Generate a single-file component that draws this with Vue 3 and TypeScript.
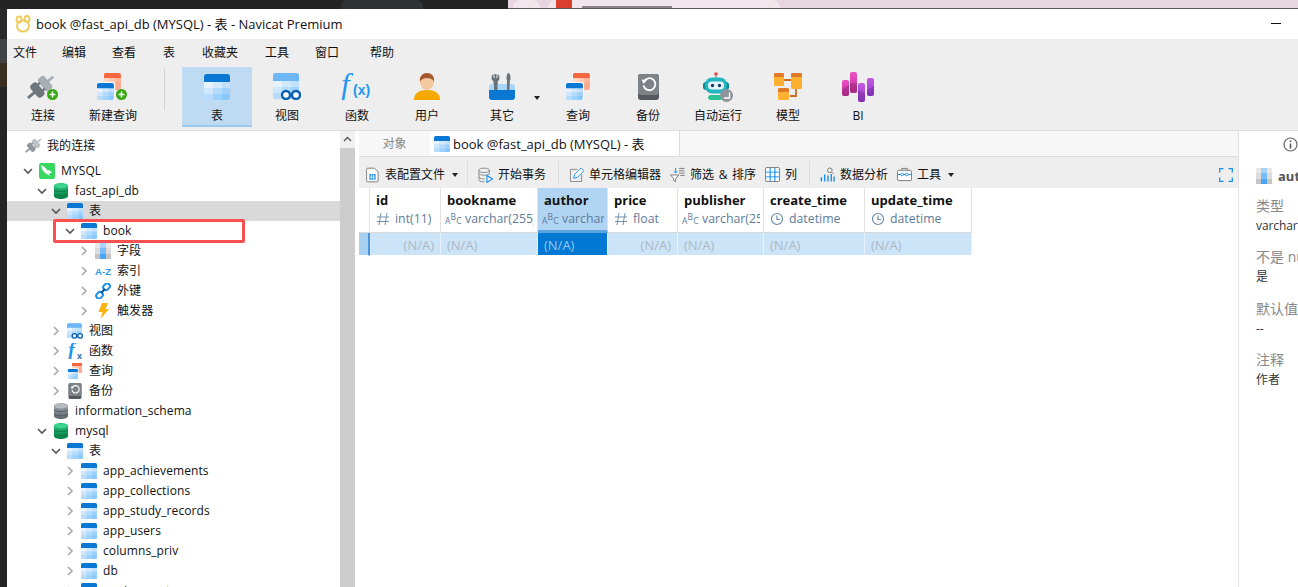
<script setup lang="ts">
interface ToolItem { label: string; icon: string; w: number; h: number; active?: boolean; cls?: string }
interface TreeRow { d: number; label: string; icon: string; open?: boolean; leaf?: boolean; sel?: boolean; mark?: boolean }
interface Col { name: string; type: string; kind: string; w: number; on?: boolean; right?: boolean }

const menus = ['文件', '编辑', '查看', '表', '收藏夹', '工具', '窗口', '帮助']

const toolsA: ToolItem[] = [
  { label: '连接', icon: 'plug', w: 32, h: 28 },
  { label: '新建查询', icon: 'newquery', w: 32, h: 28 },
]
const toolsB: ToolItem[] = [
  { label: '表', icon: 'table', w: 26, h: 26, active: true },
  { label: '视图', icon: 'view', w: 28, h: 27 },
  { label: '函数', icon: 'fx', w: 32, h: 27 },
  { label: '用户', icon: 'user', w: 26, h: 27 },
  { label: '其它', icon: 'tools', w: 26, h: 27, cls: 'other' },
]
const toolsC: ToolItem[] = [
  { label: '查询', icon: 'query', w: 24, h: 27 },
  { label: '备份', icon: 'backup', w: 21, h: 26 },
  { label: '自动运行', icon: 'robot', w: 30, h: 30 },
  { label: '模型', icon: 'model', w: 28, h: 27 },
  { label: 'BI', icon: 'bi', w: 32, h: 30 },
]

const tables = ['app_achievements', 'app_collections', 'app_study_records', 'app_users', 'columns_priv', 'db', 'engine_cost']
const tree: TreeRow[] = [
  { d: 0, label: 'MYSQL', icon: 'mysql', open: true },
  { d: 1, label: 'fast_api_db', icon: 'dbgreen', open: true },
  { d: 2, label: '表', icon: 'table', open: true, sel: true },
  { d: 3, label: 'book', icon: 'table', open: true, mark: true },
  { d: 4, label: '字段', icon: 'field' },
  { d: 4, label: '索引', icon: 'az' },
  { d: 4, label: '外键', icon: 'link' },
  { d: 4, label: '触发器', icon: 'bolt' },
  { d: 2, label: '视图', icon: 'view' },
  { d: 2, label: '函数', icon: 'fxs' },
  { d: 2, label: '查询', icon: 'query' },
  { d: 2, label: '备份', icon: 'backup' },
  { d: 1, label: 'information_schema', icon: 'dbgray', leaf: true },
  { d: 1, label: 'mysql', icon: 'dbgreen', open: true },
  { d: 2, label: '表', icon: 'table', open: true },
  ...tables.map((t) => ({ d: 3, label: t, icon: 'table' })),
]

const cols: Col[] = [
  { name: 'id', type: 'int(11)', kind: 'num', w: 71, right: true },
  { name: 'bookname', type: 'varchar(255)', kind: 'str', w: 97 },
  { name: 'author', type: 'varchar(255)', kind: 'str', w: 70, on: true },
  { name: 'price', type: 'float', kind: 'num', w: 70, right: true },
  { name: 'publisher', type: 'varchar(255)', kind: 'str', w: 86 },
  { name: 'create_time', type: 'datetime', kind: 'time', w: 101 },
  { name: 'update_time', type: 'datetime', kind: 'time', w: 107 },
]
const gridCols = `11px ${cols.map((c) => c.w + 'px').join(' ')}`

const details = [
  { k: '类型', v: 'varchar' },
  { k: '不是 null', v: '是' },
  { k: '默认值', v: '--' },
  { k: '注释', v: '作者' },
]
</script>

<template>
  <svg class="sprite" width="0" height="0" aria-hidden="true">
    <defs>
      <clipPath id="round"><rect width="26" height="26" rx="3" /></clipPath>
      <linearGradient id="greenDb" x1="0" x2="0" y1="0" y2="1"><stop offset="0" stop-color="#27c47a" /><stop offset="1" stop-color="#0a7d45" /></linearGradient>
      <linearGradient id="grayDb" x1="0" x2="0" y1="0" y2="1"><stop offset="0" stop-color="#a5abb1" /><stop offset="1" stop-color="#5d646b" /></linearGradient>
      <linearGradient id="pink" x1="0" x2="0" y1="0" y2="1"><stop offset="0" stop-color="#ea4fc4" /><stop offset="1" stop-color="#c92f9a" /></linearGradient>
      <linearGradient id="purple" x1="0" x2="0" y1="0" y2="1"><stop offset="0" stop-color="#c65be0" /><stop offset="1" stop-color="#9a38d8" /></linearGradient>
      <g id="cells" clip-path="url(#round)">
        <rect width="26" height="26" fill="#b3dbfc" />
        <rect y="8" width="9" height="6" fill="#e6f2fe" /><rect x="9" y="8" width="9" height="6" fill="#d3e9fd" /><rect x="18" y="8" width="8" height="6" fill="#c0e0fc" />
        <rect y="14" width="9" height="6" fill="#cfe7fd" /><rect x="9" y="14" width="9" height="6" fill="#b3dbfc" /><rect x="18" y="14" width="8" height="6" fill="#9ed1fb" />
        <rect y="20" width="9" height="6" fill="#b8dcfc" /><rect x="9" y="20" width="9" height="6" fill="#9ed1fb" /><rect x="18" y="20" width="8" height="6" fill="#8ac8fa" />
      </g>
      <g id="orangeCells" clip-path="url(#round)">
        <rect width="26" height="26" fill="#ffb9a0" />
        <rect width="26" height="8" fill="#f2673f" />
        <rect y="8" width="9" height="6" fill="#ffd9ca" /><rect x="9" y="8" width="9" height="6" fill="#ffc8b3" /><rect x="18" y="8" width="8" height="6" fill="#ffb59b" />
        <rect x="18" y="14" width="8" height="12" fill="#ffa98c" />
      </g>
      <g id="plugBody" transform="rotate(-40 14 14)">
        <rect x="-3" y="12.600" width="9" height="2.800" fill="#6d757d" />
        <rect x="5" y="6" width="8.500" height="16" rx="3" fill="#6d757d" />
        <rect x="15" y="6" width="8.500" height="16" rx="3" fill="#a9aeb4" />
        <rect x="12" y="9" width="4" height="2.400" fill="#6d757d" /><rect x="12" y="16.600" width="4" height="2.400" fill="#6d757d" />
        <rect x="22" y="12.600" width="8" height="2.800" fill="#a9aeb4" />
      </g>
    </defs>

    <symbol id="table" viewBox="0 0 26 26">
      <use href="#cells" />
      <path d="M3 0h20a3 3 0 0 1 3 3v5H0V3a3 3 0 0 1 3-3z" fill="#0a78d2" />
    </symbol>
    <symbol id="view" viewBox="0 0 28 27">
      <use href="#cells" />
      <path d="M3 0h20a3 3 0 0 1 3 3v5H0V3a3 3 0 0 1 3-3z" fill="#6cb6f5" />
      <circle cx="13" cy="22" r="4" fill="#fff" stroke="#0a5fb0" stroke-width="2.400" />
      <circle cx="23" cy="22" r="4" fill="#fff" stroke="#0a5fb0" stroke-width="2.400" />
    </symbol>
    <symbol id="query" viewBox="0 0 24 27">
      <g transform="translate(7 0) scale(.65)"><use href="#orangeCells" /></g>
      <rect x="0" y="9" width="18" height="18" rx="2" fill="#fff" />
      <g transform="translate(0 10) scale(.65)"><use href="#cells" /><path d="M3 0h20a3 3 0 0 1 3 3v5H0V3a3 3 0 0 1 3-3z" fill="#0a78d2" /></g>
    </symbol>
    <symbol id="newquery" viewBox="0 0 32 28">
      <g transform="translate(7 0) scale(.65)"><use href="#orangeCells" /></g>
      <rect x="0" y="9" width="18" height="18" rx="2" fill="#fff" />
      <g transform="translate(0 10) scale(.65)"><use href="#cells" /><path d="M3 0h20a3 3 0 0 1 3 3v5H0V3a3 3 0 0 1 3-3z" fill="#0a78d2" /></g>
      <circle cx="24.500" cy="21.500" r="5.500" fill="#35a813" />
      <path d="M24.500 18.500v6M21.500 21.500h6" stroke="#fff" stroke-width="1.500" />
    </symbol>
    <symbol id="plug" viewBox="0 0 32 28">
      <use href="#plugBody" />
      <circle cx="25.500" cy="21.500" r="5.500" fill="#35a813" />
      <path d="M25.500 18.500v6M22.500 21.500h6" stroke="#fff" stroke-width="1.500" />
    </symbol>
    <symbol id="plugPlain" viewBox="0 0 28 28">
      <use href="#plugBody" />
    </symbol>
    <symbol id="user" viewBox="0 0 26 27">
      <path d="M0 27c0-7 5-10 13-10s13 3 13 10z" fill="#f5a800" />
      <ellipse cx="13" cy="9" rx="7" ry="8" fill="#f5c9a0" />
      <path d="M6 9C5 3 9 0 13 0s8 3 7 9c-1-3-4-4-7-4s-6 1-7 4z" fill="#a5562a" />
    </symbol>
    <symbol id="tools" viewBox="0 0 26 27">
      <path d="M6 1v4h-1V1a4 4 0 0 0-2 4c0 2 1 3 2 3v9h4V8c1 0 2-1 2-3a4 4 0 0 0-2-4v4H8V1z" fill="#6b7178" transform="translate(-.5 0)" />
      <path d="M19 0c-1 1-1.500 3-1.500 5s.5 3 1 3v9h2V8c.5 0 1-1 1-3s-.5-4-1.500-5z" fill="#6b7178" />
      <path d="M0 14a3 3 0 0 1 3-3h20a3 3 0 0 1 3 3v3H0z" fill="#a8d5fb" />
      <path d="M0 17h26v7a3 3 0 0 1-3 3H3a3 3 0 0 1-3-3z" fill="#0a78d2" />
      <rect x="5" y="8" width="3.500" height="9" fill="#6b7178" /><rect x="18" y="8" width="2.500" height="9" fill="#6b7178" />
    </symbol>
    <symbol id="backup" viewBox="0 0 21 26">
      <rect width="21" height="26" rx="3" fill="#55595e" />
      <rect width="21" height="21" rx="3" fill="#7d8287" />
      <path d="M6 7.500a6 6 0 1 1-.5 4" fill="none" stroke="#fff" stroke-width="1.800" />
      <path d="M3.500 5.500l5.500.5-3.500 4z" fill="#fff" />
    </symbol>
    <symbol id="robot" viewBox="0 0 30 30">
      <circle cx="13" cy="2" r="1.800" fill="#e64545" /><rect x="12.400" y="3" width="1.200" height="3" fill="#8a9096" />
      <rect x="0" y="10" width="26" height="8" rx="3" fill="#0f8a8f" />
      <rect x="2" y="5.500" width="22" height="16" rx="7" fill="#23b5c0" />
      <rect x="5" y="9.500" width="16" height="8" rx="4" fill="#e8f6fb" />
      <circle cx="9.500" cy="13.500" r="1.700" fill="#1f3d6b" /><circle cx="16.500" cy="13.500" r="1.700" fill="#1f3d6b" />
      <path d="M5 26a3 3 0 0 1 3-3h10v5H8a3 3 0 0 1-3-2z" fill="#27c295" />
      <circle cx="23.500" cy="23.500" r="6.500" fill="#8d949b" />
      <path d="M26.500 20.500v5.500H21" fill="none" stroke="#fff" stroke-width="1.400" />
    </symbol>
    <symbol id="model" viewBox="0 0 28 27">
      <path d="M10 7h10M22 16v7H16" fill="none" stroke="#c96f22" stroke-width="1.800" />
      <rect x="0" y="0" width="10" height="13" rx="1.500" fill="#ffb030" /><path d="M1.500 0h7A1.500 1.500 0 0 1 10 1.500V4H0V1.500A1.500 1.500 0 0 1 1.500 0z" fill="#e07a28" />
      <rect x="17" y="0" width="11" height="16" rx="1.500" fill="#ffb030" /><path d="M18.500 0h8A1.500 1.500 0 0 1 28 1.500V4H17V1.500A1.500 1.500 0 0 1 18.500 0z" fill="#e07a28" />
      <rect x="4" y="15" width="11" height="12" rx="1.500" fill="#ffb030" /><path d="M5.500 15h8a1.500 1.500 0 0 1 1.500 1.500V19H4v-2.500A1.500 1.500 0 0 1 5.500 15z" fill="#e07a28" />
    </symbol>
    <symbol id="bi" viewBox="0 0 32 30">
      <rect x="0" y="8" width="7" height="16" rx="2" fill="url(#pink)" />
      <rect x="8" y="0" width="7" height="21" rx="2" fill="url(#pink)" />
      <rect x="16" y="11" width="7" height="19" rx="2" fill="url(#purple)" />
      <rect x="25" y="6" width="7" height="18" rx="2" fill="url(#purple)" />
      <path d="M0 17l7-4v11H2a2 2 0 0 1-2-2zM8 21V11h7v10zM16 18l7 3v7a2 2 0 0 1-2 2h-3a2 2 0 0 1-2-2zM25 18l7-4v8a2 2 0 0 1-2 2h-3a2 2 0 0 1-2-2z" fill="#000" opacity=".16" />
    </symbol>
    <symbol id="mysql" viewBox="0 0 16 16">
      <rect width="16" height="16" rx="2" fill="#36d860" />
      <path d="M2 2c3 1 5 3 6 5 2 0 4 1 5 3-1 0-2 0-3 .5l1 3c-1-1-2-2-3-2.500-1 0-2-1-3-2L3 6z" fill="#fff" />
    </symbol>
    <symbol id="dbgreen" viewBox="0 0 14 16">
      <path d="M0 3c0-4 14-4 14 0v10c0 4-14 4-14 0z" fill="url(#greenDb)" />
      <ellipse cx="7" cy="3" rx="6.500" ry="2.500" fill="#3bd68c" />
      <path d="M0 7c2 2 12 2 14 0M0 11c2 2 12 2 14 0" fill="none" stroke="#0a6e3c" stroke-width=".7" />
    </symbol>
    <symbol id="dbgray" viewBox="0 0 14 16">
      <path d="M0 3c0-4 14-4 14 0v10c0 4-14 4-14 0z" fill="url(#grayDb)" />
      <ellipse cx="7" cy="3" rx="6.500" ry="2.500" fill="#b5babf" />
      <path d="M0 7c2 2 12 2 14 0M0 11c2 2 12 2 14 0" fill="none" stroke="#4e555b" stroke-width=".7" />
    </symbol>
    <symbol id="field" viewBox="0 0 16 16">
      <rect width="5" height="5" fill="#e8e8e8" /><rect x="5" width="6" height="5" fill="#a8d4fb" /><rect x="11" width="5" height="5" fill="#e8e8e8" />
      <rect y="5" width="5" height="6" fill="#dcdcdc" /><rect x="5" y="5" width="6" height="6" fill="#78bdf7" /><rect x="11" y="5" width="5" height="6" fill="#dcdcdc" />
      <rect y="11" width="5" height="5" fill="#c4c4c4" /><rect x="5" y="11" width="6" height="5" fill="#4aa5f2" /><rect x="11" y="11" width="5" height="5" fill="#c4c4c4" />
    </symbol>
    <symbol id="link" viewBox="0 0 16 16">
      <g fill="none" stroke="#1b8fe8" stroke-width="2">
        <rect x="8" y="1" width="7" height="5.500" rx="2.700" transform="rotate(-45 11.500 3.700)" />
        <rect x="1" y="9.500" width="7" height="5.500" rx="2.700" transform="rotate(-45 4.500 12.200)" />
        <path d="M6 10l4-4" stroke="#0a4f8f" />
      </g>
    </symbol>
    <symbol id="bolt" viewBox="0 0 16 16">
      <path d="M7 0h6l-2.500 6H14L5.500 16 7.500 9H3.500z" fill="#fbb20c" />
    </symbol>

    <symbol id="sProfile" viewBox="0 0 16 16">
      <path d="M3 .7h7l4 4V14a1.300 1.300 0 0 1-1.300 1.300H3A1.300 1.300 0 0 1 1.700 14V2A1.300 1.300 0 0 1 3 .7z" fill="#fff" stroke="#777" />
      <rect x="4.500" y="7" width="7" height="6" rx="1" fill="#1b8fe8" />
      <path d="M4.500 9.200h7M4.500 11h7M6.800 7v6M9.200 7v6" stroke="#fff" stroke-width=".6" />
    </symbol>
    <symbol id="sDb" viewBox="0 0 16 16">
      <g fill="none" stroke="#888">
        <ellipse cx="6.500" cy="3" rx="5.500" ry="2.300" />
        <path d="M1 3v10c0 2 4 2.500 6 2.300M12 3v4M1 6.500c1 2 8 2.500 11 .5M1 10c1 2 4 2.300 6 2.200" />
      </g>
      <path d="M9.500 8.500l6 3.700-6 3.700z" fill="none" stroke="#1b8fe8" stroke-width="1.200" />
    </symbol>
    <symbol id="sEdit" viewBox="0 0 16 16">
      <path d="M9 2.500H1.500v13h12V8" fill="none" stroke="#888" />
      <path d="M5 12l1-4 7-7 3 3-7 7z" fill="#fff" stroke="#1b8fe8" />
    </symbol>
    <symbol id="sFilter" viewBox="0 0 16 16">
      <path d="M.5 8.500h9L6 12.500v3l-2-1v-2z" fill="#fff" stroke="#777" />
      <path d="M6 1v5M4.500 4.500L6 6.500l1.500-2" fill="none" stroke="#1b8fe8" />
      <path d="M9.500 1.500h6M9.500 4h6M9.500 6.500h6M11 9h4.500" stroke="#777" />
    </symbol>
    <symbol id="sCols" viewBox="0 0 16 16">
      <rect x=".5" y=".5" width="15" height="15" rx="1.500" fill="#fff" stroke="#777" />
      <path d="M5.500 1v14M10.500 1v14" stroke="#1b8fe8" stroke-width="1.200" /><path d="M1 5.500h14M1 10.500h14" stroke="#1b8fe8" />
    </symbol>
    <symbol id="sChart" viewBox="0 0 16 16">
      <path d="M1.500 11v4.500M5 8v7.500M8.500 9v6.500M12 7.500v8M15 10v5.500" stroke="#1b8fe8" stroke-width="1.500" fill="none" />
      <circle cx="10.500" cy="3.500" r="2.500" fill="none" stroke="#777" /><path d="M12.500 5.500l2 2" stroke="#777" />
    </symbol>
    <symbol id="sTool" viewBox="0 0 16 16">
      <path d="M5 3.500V1.500h6v2" fill="none" stroke="#777" />
      <rect x=".5" y="3.500" width="15" height="11" rx="1.500" fill="#fff" stroke="#777" />
      <path d="M1 8h3M7 8h2M12 8h3" stroke="#1b8fe8" /><rect x="4" y="6.800" width="3" height="2.400" rx="1" fill="none" stroke="#1b8fe8" /><rect x="9" y="6.800" width="3" height="2.400" rx="1" fill="none" stroke="#1b8fe8" />
    </symbol>
    <symbol id="sFull" viewBox="0 0 14 14">
      <path d="M.7 4.500V.7h3.800M9.500.7h3.800v3.800M13.300 9.500v3.800H9.500M4.500 13.300H.7V9.500" fill="none" stroke="#1b8fe8" stroke-width="1.300" />
    </symbol>
    <symbol id="sLogo" viewBox="0 0 16 18">
      <g fill="none" stroke="#f0cb5e" stroke-width="2">
        <ellipse cx="8" cy="11" rx="6" ry="5.500" /><ellipse cx="4" cy="4.500" rx="2.500" ry="3" /><ellipse cx="12" cy="4" rx="2.500" ry="3" />
      </g>
    </symbol>
    <symbol id="sHash" viewBox="0 0 14 14">
      <path d="M5 1L3 13M11 1L9 13M1 5h12M1 9.500h12" stroke="#7490ad" fill="none" />
    </symbol>
    <symbol id="sClock" viewBox="0 0 14 14">
      <circle cx="7" cy="7" r="5.500" fill="none" stroke="#6a8aac" stroke-width="1.200" />
      <path d="M7 3.500V7.500h3" fill="none" stroke="#6a8aac" stroke-width="1.200" />
    </symbol>
  </svg>

  <div class="screen">
    <div class="desk-top">
      <div class="desk-dark"><span class="dark-tab"></span></div>
      <div class="desk-pink">
        <span class="pill"></span><span class="pill wide"><i class="red"></i><i class="ghost"></i></span>
      </div>
    </div>
    <div class="desk-row">
      <div class="desk-left">
        <span class="l-a"></span><span class="l-b"></span><span class="l-c"></span>
      </div>
      <div class="win">
        <header class="title">
          <svg class="logo" width="16" height="18"><use href="#sLogo" /></svg>
          <span>book @fast_api_db (MYSQL) - 表 - Navicat Premium</span>
          <i class="min"></i>
        </header>

        <nav class="menu">
          <span v-for="m in menus" :key="m">{{ m }}</span>
        </nav>

        <div class="toolbar">
          <div v-for="t in toolsA" :key="t.label" class="tool">
            <span class="tool-ico"><svg :width="t.w" :height="t.h"><use :href="'#' + t.icon" /></svg></span>
            <span>{{ t.label }}</span>
          </div>
          <i class="tool-sep"></i>
          <div v-for="t in toolsB" :key="t.label" class="tool" :class="[t.cls, { active: t.active }]">
            <span class="tool-ico">
              <svg :width="t.w" :height="t.h">
                <template v-if="t.icon === 'fx'">
                  <text x="0" y="22" class="fx-f" font-size="31">f</text>
                  <text x="12" y="22" class="fx-x" font-size="14">(x)</text>
                </template>
                <use v-else :href="'#' + t.icon" />
              </svg>
            </span>
            <span>{{ t.label }}</span>
          </div>
          <i class="caret tool-caret"></i>
          <div v-for="t in toolsC" :key="t.label" class="tool">
            <span class="tool-ico"><svg :width="t.w" :height="t.h"><use :href="'#' + t.icon" /></svg></span>
            <span>{{ t.label }}</span>
          </div>
        </div>

        <div class="body">
          <aside class="side">
            <div class="tree">
              <div class="conn-row">
                <svg width="17" height="17" class="faded"><use href="#plugPlain" /></svg>
                <span>我的连接</span>
              </div>
              <div
                v-for="(r, i) in tree"
                :key="i"
                class="row"
                :class="{ sel: r.sel }"
                :style="{ paddingLeft: 15 + r.d * 14 + 'px' }"
              >
                <svg class="chev" width="12" height="12" viewBox="0 0 12 12">
                  <path v-if="r.open" d="M2 4l4 4 4-4" fill="none" stroke="#555" stroke-width="1.600" />
                  <path v-else-if="!r.leaf" d="M4 2l4 4-4 4" fill="none" stroke="#aaa" stroke-width="1.600" />
                </svg>
                <span class="row-ico">
                  <svg width="16" height="16">
                    <text v-if="r.icon === 'az'" x="0" y="12" class="az" font-size="9.500">A-Z</text>
                    <template v-else-if="r.icon === 'fxs'">
                      <text x="1" y="14" class="fx-f bold" font-size="20">f</text>
                      <text x="10" y="16" class="fx-x dark" font-size="9">x</text>
                    </template>
                    <use v-else :href="'#' + r.icon" />
                  </svg>
                </span>
                <span class="row-text">{{ r.label }}</span>
                <i v-if="r.mark" class="mark"></i>
              </div>
            </div>
            <div class="scroll">
              <svg width="15" height="17" viewBox="0 0 15 17"><path d="M4 10l3.500-3.500L11 10" fill="none" stroke="#555" stroke-width="1.300" /></svg>
            </div>
          </aside>

          <main class="main">
            <div class="tabs">
              <span class="tab">对象</span>
              <span class="tab cur">
                <svg width="16" height="16"><use href="#table" /></svg>
                book @fast_api_db (MYSQL) - 表
              </span>
            </div>
            <div class="subbar">
              <span class="sb"><svg width="15" height="16"><use href="#sProfile" /></svg>表配置文件</span>
              <i class="caret"></i>
              <i class="sb-sep"></i>
              <span class="sb"><svg width="15" height="16"><use href="#sDb" /></svg>开始事务</span>
              <i class="sb-sep"></i>
              <span class="sb"><svg width="15" height="15"><use href="#sEdit" /></svg>单元格编辑器</span>
              <span class="sb"><svg width="15" height="15"><use href="#sFilter" /></svg>筛选 &amp; 排序</span>
              <span class="sb"><svg width="15" height="15"><use href="#sCols" /></svg>列</span>
              <i class="sb-sep"></i>
              <span class="sb"><svg width="15" height="15"><use href="#sChart" /></svg>数据分析</span>
              <span class="sb"><svg width="15" height="15"><use href="#sTool" /></svg>工具</span>
              <i class="caret"></i>
              <svg class="full" width="14" height="14"><use href="#sFull" /></svg>
            </div>
            <div class="grid" :style="{ gridTemplateColumns: gridCols }">
              <div class="h-corner"></div>
              <div v-for="c in cols" :key="c.name" class="h-cell" :class="{ on: c.on }">
                <b>{{ c.name }}</b>
                <span class="type">
                  <svg v-if="c.kind === 'num'" width="14" height="14"><use href="#sHash" /></svg>
                  <svg v-else-if="c.kind === 'time'" width="14" height="14"><use href="#sClock" /></svg>
                  <span v-else class="abc">A<sup>B</sup>C</span>
                  <span class="type-name">{{ c.type }}</span>
                </span>
              </div>
              <div class="r-head"></div>
              <div v-for="c in cols" :key="c.name + '-v'" class="r-cell" :class="{ on: c.on, right: c.right }">(N/A)</div>
            </div>
          </main>

          <aside class="info">
            <svg class="info-i" width="15" height="15" viewBox="0 0 15 15">
              <circle cx="7.500" cy="7.500" r="6.500" fill="none" stroke="#666" stroke-width="1.200" />
              <path d="M7.500 6.500v5M7.500 3.500v1.600" stroke="#555" stroke-width="1.500" />
            </svg>
            <div class="info-head"><svg width="16" height="16"><use href="#field" /></svg><b>author</b></div>
            <div v-for="d in details" :key="d.k" class="kv">
              <span class="k">{{ d.k }}</span>
              <span class="v">{{ d.v }}</span>
            </div>
          </aside>
        </div>
      </div>
    </div>
  </div>
</template>

<style>
html, body { margin: 0; height: 100%; overflow: hidden; background: #fff; }
</style>

<style scoped>
.sprite { position: absolute; }
.screen {
  width: 1298px;
  height: 587px;
  overflow: hidden;
  display: flex;
  flex-direction: column;
  font: 12px/16px "Open Sans", "Noto Sans CJK SC", sans-serif;
  color: #111;
}
.desk-top { height: 9px; display: flex; flex: none; }
.desk-dark { width: 508px; background: #242424; padding-left: 341px; box-sizing: border-box; }
.dark-tab { display: block; width: 82px; height: 9px; background: #2f3336; border-radius: 6px 6px 0 0; }
.desk-pink {
  flex: 1;
  background: #e7d6df;
  border-bottom: 1px solid #5c5a5c;
  display: flex;
  gap: 8px;
  padding-left: 5px;
  box-sizing: border-box;
}
.pill { width: 27px; height: 8px; border-radius: 12px 12px 0 0; background: #f0e6ec; display: flex; align-items: flex-end; }
.pill.wide { width: 232px; padding-left: 8px; gap: 10px; box-sizing: border-box; }
.red { width: 16px; height: 8px; background: #d9412e; }
.ghost { width: 90px; height: 2px; background: #8a8488; }
.desk-row { flex: 1; display: flex; min-height: 0; }
.desk-left { width: 7px; background: #242424; display: flex; flex-direction: column; flex: none; }
.l-a { height: 30px; background: #2a2a2a; }
.l-b { height: 24px; background: #404246; }
.l-c { height: 24px; background: #3a3022; }

.win { flex: 1; min-width: 0; display: flex; flex-direction: column; background: #fff; }
.title { height: 30px; flex: none; display: flex; align-items: center; padding: 0 0 1px 8px; box-sizing: border-box; font-size: 13px; }
.logo { margin-right: 5px; }
.min { width: 10px; height: 1px; background: #111; margin-left: auto; margin-right: 17px; }

.menu {
  height: 27px;
  flex: none;
  background: #eee;
  display: grid;
  grid-template-columns: 49px 50px 51px 39px 63px 50px 55px 24px;
  align-items: center;
  padding-left: 6px;
}

.toolbar { height: 65px; flex: none; background: #eee; border-bottom: 1px solid #ddd; display: flex; box-sizing: border-box; padding-left: 1px; padding-top: 1px; }
.tool { width: 70px; height: 60px; flex: none; display: flex; flex-direction: column; align-items: center; padding-top: 5px; box-sizing: border-box; }
.tool.active { background: #bfdbf3; border-bottom: 2px solid #9cc8ee; }
.tool.other { margin-left: 5px; }
.tool-ico { height: 29px; display: flex; align-items: center; justify-content: center; margin-bottom: 7px; }
.fx-f { font-family: "Liberation Serif", serif; font-style: italic; fill: #2196ee; }
.fx-f.bold { font-weight: 700; }
.fx-x { font-family: "Liberation Sans", sans-serif; font-weight: 700; fill: #2196ee; }
.fx-x.dark { fill: #1569b8; }
.az { font-family: "Liberation Sans", sans-serif; font-weight: 700; fill: #2a96ec; }
.tool-sep { width: 1px; height: 42px; background: #d5d5d5; margin: 1px 17px 0 16px; }
.caret { width: 0; height: 0; border: 3.500px solid transparent; border-top: 4px solid #222; border-bottom: 0; flex: none; }
.tool-caret { margin: 29px 3px 0 -3px; }

.body { flex: 1; min-height: 0; display: flex; }
.side { width: 348px; flex: none; display: flex; background: #fff; }
.tree { width: 333px; flex: none; letter-spacing: .1px; }
.conn-row { height: 30px; display: flex; align-items: center; gap: 5px; padding: 0 0 1px 18px; box-sizing: border-box; }
.faded { opacity: .75; }
.row { height: 20px; display: flex; align-items: center; position: relative; }
.row.sel { background: #d9d9d9; }
.chev { flex: none; margin-right: 5px; }
.row-ico { width: 16px; height: 16px; flex: none; display: flex; margin-right: 6px; }
.row-text { white-space: nowrap; }
.mark {
  position: absolute;
  left: 46px;
  top: -2px;
  width: 192px;
  height: 24px;
  box-sizing: border-box;
  border: 3px solid #fa5050;
  border-radius: 2px;
}
.scroll { width: 15px; background: #cdcdcd; }
.scroll svg { display: block; background: #f0f0f0; }

.main { width: 879px; margin-left: 4px; flex: none; display: flex; flex-direction: column; }
.tabs { height: 26px; flex: none; background: #f7f7f7; border-bottom: 1px solid #ddd; display: flex; box-sizing: border-box; }
.tab { width: 71px; display: flex; align-items: center; justify-content: center; color: #888; gap: 3px; }
.tab.cur { width: 250px; background: #fff; color: #111; justify-content: flex-start; padding-left: 4px; border-right: 1px solid #ddd; box-sizing: border-box; font-size: 13px; }
.subbar { height: 31px; flex: none; background: #eee; display: flex; align-items: center; padding: 4px 0 0 6px; box-sizing: border-box; }
.sb { display: flex; align-items: center; gap: 5px; margin-right: 9px; white-space: nowrap; word-spacing: 1.500px; }
.sb svg { flex: none; }
.subbar > .caret { margin: 0 6px 0 -2px; }
.sb-sep { width: 1px; height: 24px; background: #ddd; margin: -4px 10px 0 3px; }
.full { margin-left: auto; margin-right: 5px; }

.grid { display: grid; width: 613px; grid-template-rows: 45px 23px; }
.h-corner { border-right: 1px solid #e2e2e2; border-bottom: 1px solid #d8d8d8; }
.h-cell {
  padding: 3px 0 0 6px;
  border-right: 1px solid #e2e2e2;
  border-bottom: 1px solid #d8d8d8;
  overflow: hidden;
  white-space: nowrap;
  box-sizing: border-box;
}
.h-cell b { display: block; font-size: 13px; line-height: 19px; color: #111; }
.h-cell.on { background: #b0d4f1; border-bottom: 3px solid #5aa5e0; }
.type { display: flex; align-items: center; gap: 5px; color: #5d7b9a; line-height: 16px; margin-top: 1px; }
.type svg { flex: none; }
.type-name { overflow: hidden; margin-right: 3px; min-width: 0; font-size: 12.300px; }
.abc { font-size: 8.500px; flex: none; width: 15px; color: #5d7b9a; line-height: 12px; margin-left: -2px; padding-top: 4px; letter-spacing: .2px; }
.abc sup { font-size: 8.500px; vertical-align: 4px; line-height: 0; }
.r-head { background: #a8d0f0; border-right: 2px solid #4f94d4; border-bottom: 1px solid #fff; box-sizing: border-box; }
.r-cell {
  background: #cce4f7;
  color: #adb9c6;
  padding: 0 6px;
  font-size: 13px;
  line-height: 24px;
  height: 23px;
  border-right: 1px solid #eaf3fb;
  border-bottom: 1px solid #fff;
  box-sizing: border-box;
  overflow: hidden;
}
.r-cell.right { text-align: right; }
.r-cell.on { background: #0078d4; color: #9cc6ea; }

.info { flex: 1; min-width: 0; border-left: 1px solid #e2e2e2; padding: 6px 0 0 17px; overflow: hidden; display: flex; flex-direction: column; white-space: nowrap; }
.info-i { align-self: flex-start; margin-left: 27px; flex: none; }
.info-head { display: flex; align-items: center; gap: 6px; margin-top: 16px; height: 16px; font-size: 13px; color: #555; }
.info-head svg { flex: none; }
.kv { display: flex; flex-direction: column; }
.info-head + .kv { margin-top: 12px; }
.kv + .kv { margin-top: 11.300px; }
.k { color: #888; line-height: 20px; font-size: 14px; }
.v { color: #333; line-height: 20px; letter-spacing: -.1px; }
</style>
